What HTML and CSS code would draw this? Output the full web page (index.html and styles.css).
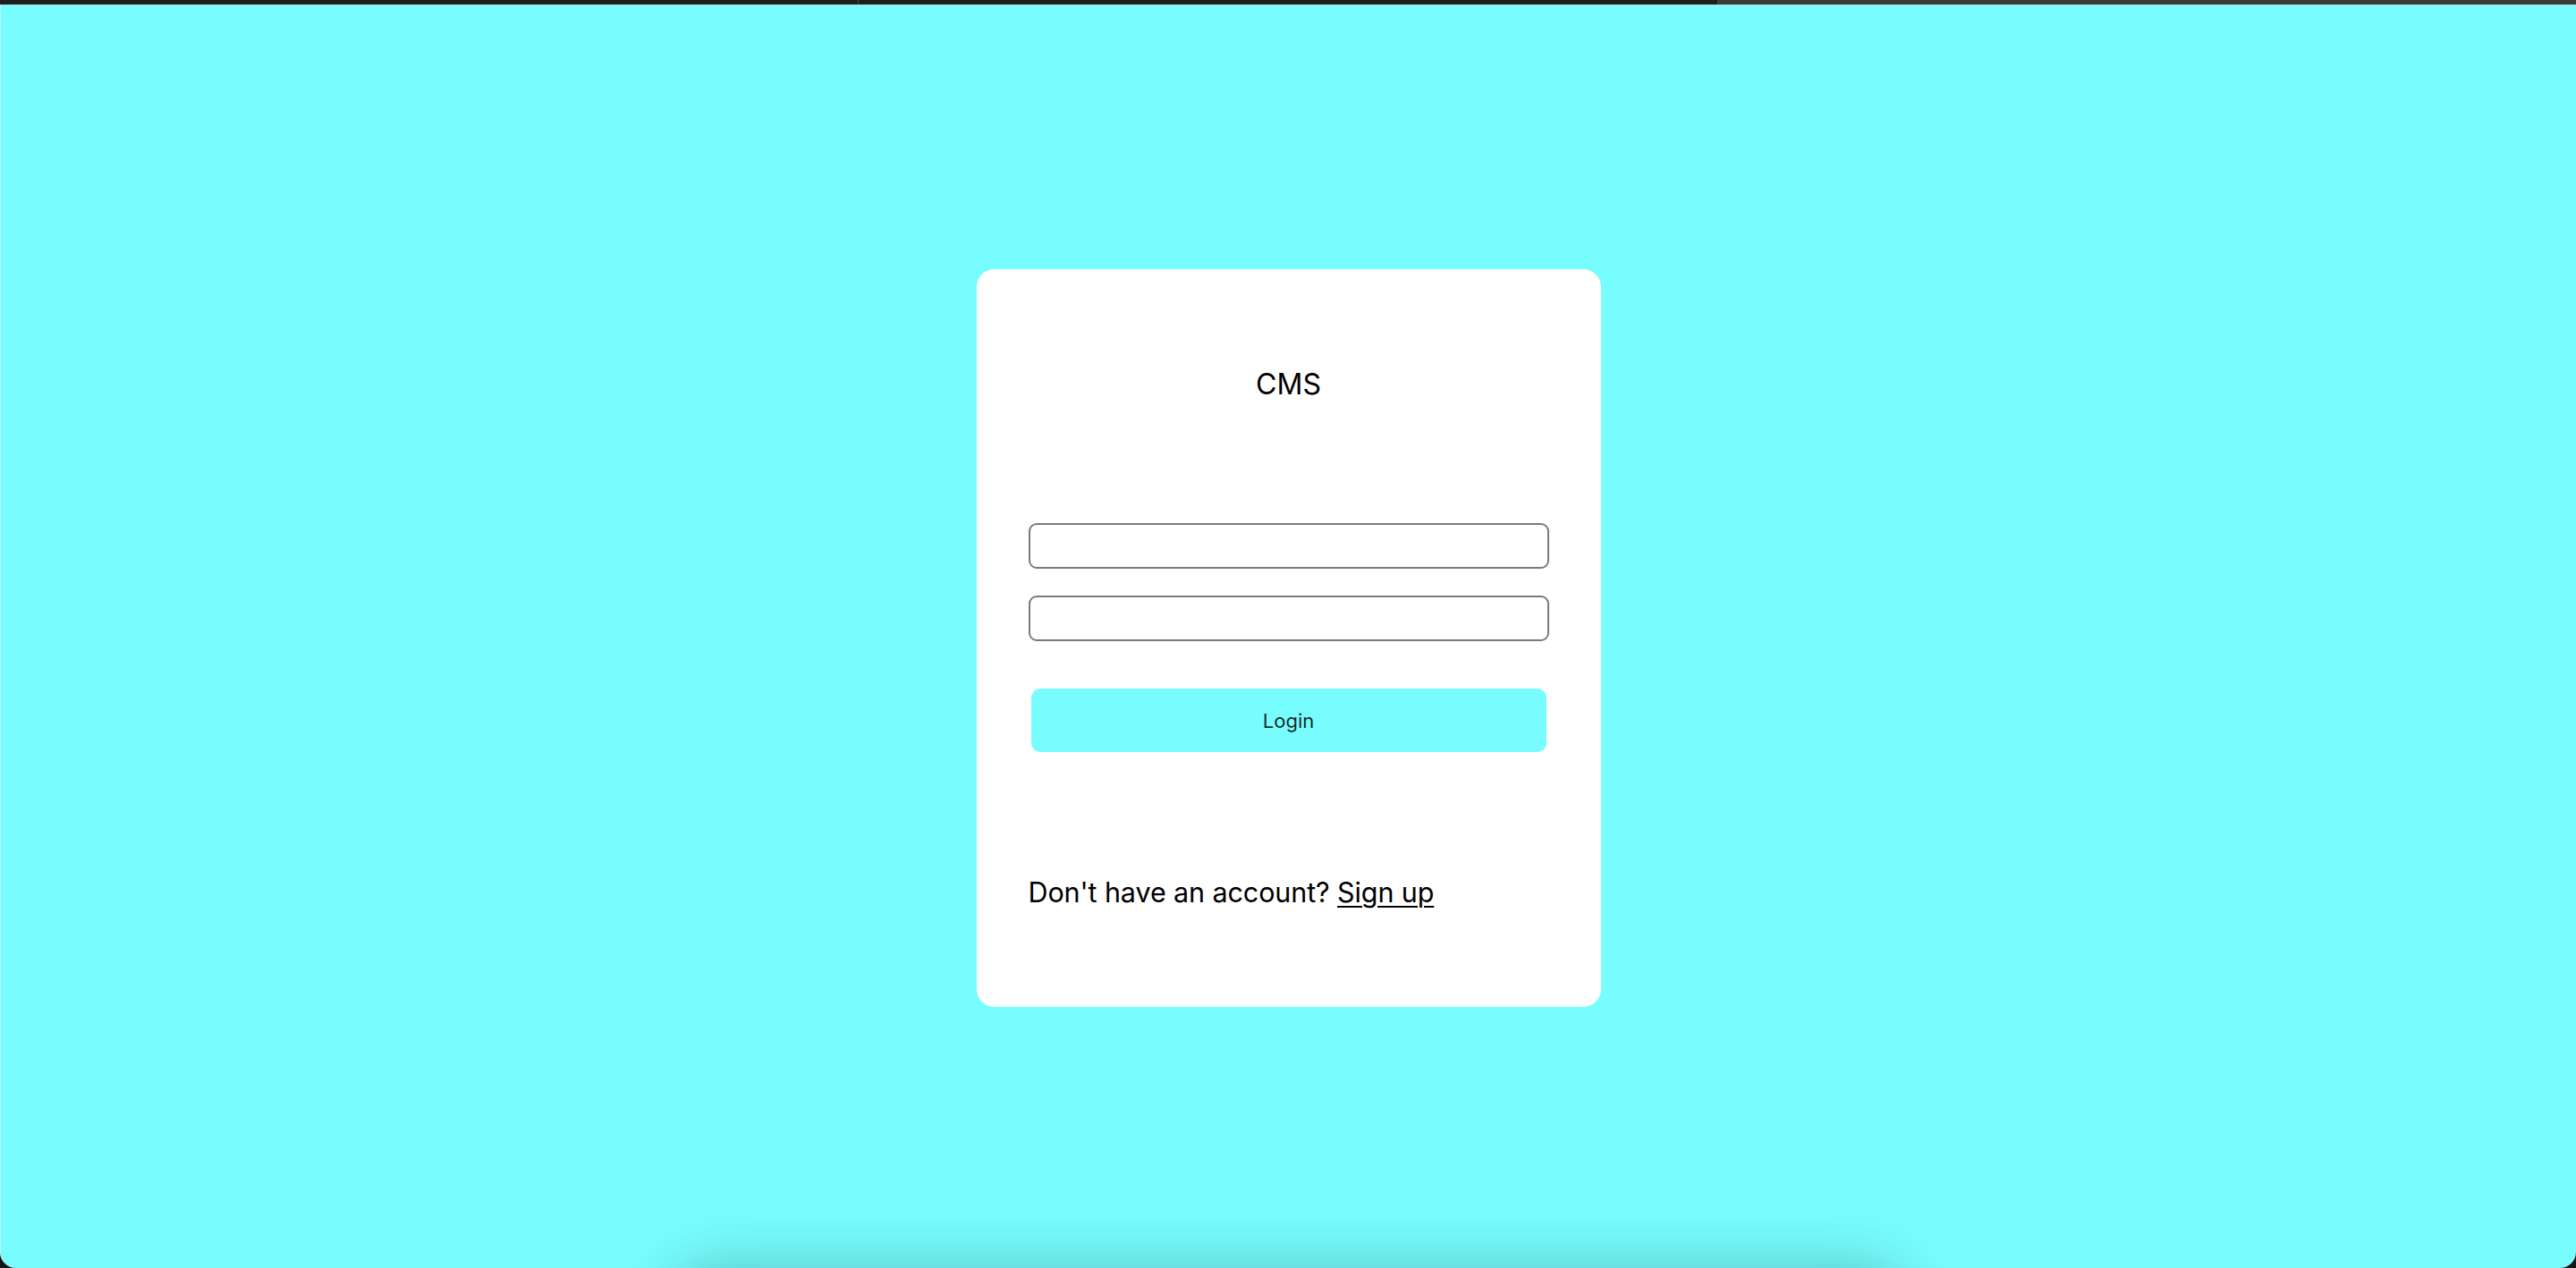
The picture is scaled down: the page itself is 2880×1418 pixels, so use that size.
FILE: index.html
```html
<!DOCTYPE html>
<html lang="en">
<head>
<meta charset="utf-8">
<title>CMS</title>
<link rel="stylesheet" href="styles.css">
</head>
<body>
<div class="window">
  <div class="tabbar">
    <div class="tab"></div>
    <div class="tab"></div>
    <div class="tab tab-light"></div>
  </div>
  <div class="edge"></div>
  <main class="app">
    <form class="card">
      <h1 class="title">CMS</h1>
      <input class="field" type="text" aria-label="Username">
      <input class="field field-second" type="password" aria-label="Password">
      <button class="login" type="button">Login</button>
      <p class="signup">Don't have an account? <a class="signup-link" href="#">Sign up</a></p>
    </form>
    <div class="dock-shadow"></div>
  </main>
</div>
</body>
</html>
```

FILE: styles.css
```css
html, body {
  margin: 0;
  padding: 0;
  background: #151515;
}

.window {
  width: 2880px;
  height: 1418px;
  display: flex;
  flex-direction: column;
  overflow: hidden;
}

.tabbar {
  height: 5px;
  display: flex;
  background: #1e1e1e;
}

.tab {
  flex: 1;
  background: #1e1e1e;
  border-right: 1px solid #4a4a4a;
}

.tab-light {
  background: #3a3a3a;
  border-right: none;
}

.edge {
  height: 1px;
  background: #a6d8d8;
}

.app {
  flex: 1;
  position: relative;
  overflow: hidden;
  background: #78fdfe;
  border-left: 1px solid #b4ffff;
  border-radius: 0 0 18px 18px;
  display: flex;
  justify-content: center;
  align-items: flex-start;
  padding-top: 295px;
  font-family: Inter, "Liberation Sans", sans-serif;
}

.card {
  width: 582px;
  padding: 110px 58px 108px;
  background: #ffffff;
  border-radius: 20px;
  display: flex;
  flex-direction: column;
  position: relative;
  z-index: 1;
}

.title {
  margin: 0;
  font-size: 32px;
  font-weight: 400;
  line-height: 38px;
  text-align: center;
  color: #000;
}

.field {
  box-sizing: border-box;
  margin: 136px 0 0;
  height: 51px;
  width: 100%;
  border: 2px solid #7a7a7a;
  border-radius: 9px;
  background: #fff;
  padding: 0 10px;
  font-size: 20px;
}

.field-second {
  margin-top: 30px;
}

.login {
  margin: 53px 3px 0;
  height: 71px;
  border: none;
  border-radius: 10px;
  background: #78fdfe;
  font-family: Inter, "Liberation Sans", sans-serif;
  font-size: 22px;
  color: rgba(0, 0, 0, 0.85);
  cursor: pointer;
}

.signup {
  margin: 137px 0 0;
  font-size: 30.5px;
  letter-spacing: -0.1px;
  line-height: 40px;
  color: #000;
}

.signup-link {
  color: #000;
  text-decoration: underline;
  text-underline-offset: 4px;
  text-decoration-thickness: 2px;
}

.dock-shadow {
  position: absolute;
  left: 760px;
  width: 1360px;
  bottom: -120px;
  height: 110px;
  border-radius: 40px;
  box-shadow: 0 0 70px 10px rgba(0, 40, 40, 0.28);
}
```
